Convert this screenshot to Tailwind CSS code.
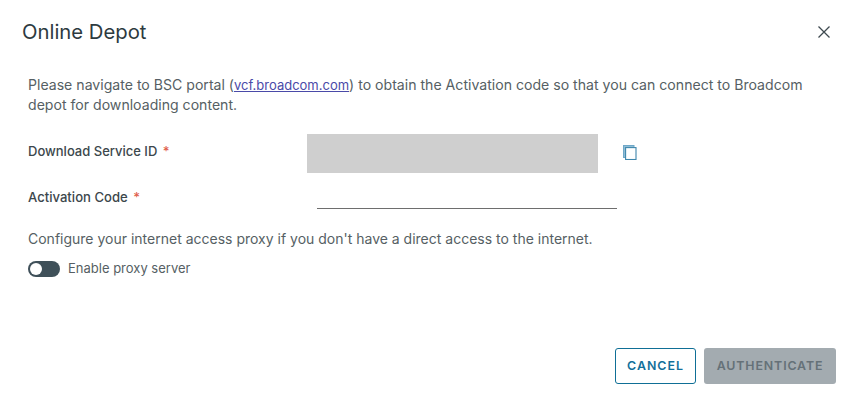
<!DOCTYPE html>
<html lang="en">
<head>
    <meta charset="UTF-8">
    <title>Online Depot</title>
    <script src="https://cdn.jsdelivr.net/npm/@tailwindcss/browser@4"></script>
</head>
<body class="bg-white w-[853px] h-[402px] overflow-hidden font-['Inter',sans-serif] text-[#565f64]">

    <div class="flex flex-col h-[402px]">
        <!-- Header -->
        <div class="flex justify-between items-center pl-[22px] pr-[21px] pt-[14px] h-[50px]">
            <h1 class="text-[20.3px] leading-[26px] text-[#2d3a40]">Online Depot</h1>
            <button class="text-[#3f4a50]">
                <svg class="block" width="16" height="16" viewBox="0 0 16 16" fill="none" stroke="currentColor" stroke-width="1.3"><path d="M2.5 2.5l11 11M13.5 2.5l-11 11"/></svg>
            </button>
        </div>

        <!-- Body -->
        <div class="pl-[28px] pr-[40px] pt-[25px]">
            <p class="text-[14.1px] leading-[20px]">Please navigate to BSC portal (<a href="#" class="text-[13px] text-[#4a4aa8] underline">vcf.broadcom.com</a>) to obtain the Activation code so that you can connect to Broadcom depot for downloading content.</p>

            <div class="flex items-center mt-[19px] h-[39px]">
                <label class="w-[279px] text-[13px] font-medium text-[#3c474c] mt-[-3px]">Download Service ID <span class="text-[#e0604c] ml-[2px]">*</span></label>
                <div class="w-[291px] h-[39px] bg-[#cfcfcf]"></div>
                <svg class="ml-[25px] mt-[-3px]" width="14" height="15" viewBox="0 0 14 15" fill="none">
                    <rect x="0.5" y="0.5" width="10.5" height="12" fill="#8fbdd6" stroke="#6fa8c8" stroke-width="1"/>
                    <rect x="2.6" y="2.6" width="10.4" height="11.9" fill="white" stroke="#3f86ac" stroke-width="1.1"/>
                </svg>
            </div>

            <div class="flex items-end mt-[11px] h-[25px]">
                <label class="w-[289px] text-[13.1px] font-medium text-[#3c474c] self-start mt-[4px]">Activation Code <span class="text-[#e0604c] ml-[2px]">*</span></label>
                <div class="w-[300px] border-b border-[#6e6e6e]"></div>
            </div>

            <p class="text-[14px] leading-[20px] mt-[20px]">Configure your internet access proxy if you don't have a direct access to the internet.</p>

            <div class="flex items-center mt-[10px]">
                <div class="w-[32px] h-[16px] rounded-full bg-[#3f5059] flex items-center pl-[2px]">
                    <div class="w-[12px] h-[12px] rounded-full bg-white"></div>
                </div>
                <span class="ml-[8px] text-[13px]">Enable proxy server</span>
            </div>
        </div>

        <!-- Footer -->
        <div class="mt-auto flex justify-end gap-[8px] pr-[17px] pb-[18px]">
            <button class="w-[81px] h-[36px] rounded-[3px] border border-[#0f6f96] bg-white text-[#13709a] text-[12.4px] font-semibold tracking-[0.08em]">CANCEL</button>
            <button class="w-[132px] h-[36px] rounded-[3px] bg-[#a3abb0] text-[#657178] text-[12.4px] font-semibold tracking-[0.07em]">AUTHENTICATE</button>
        </div>
    </div>
</body>
</html>
